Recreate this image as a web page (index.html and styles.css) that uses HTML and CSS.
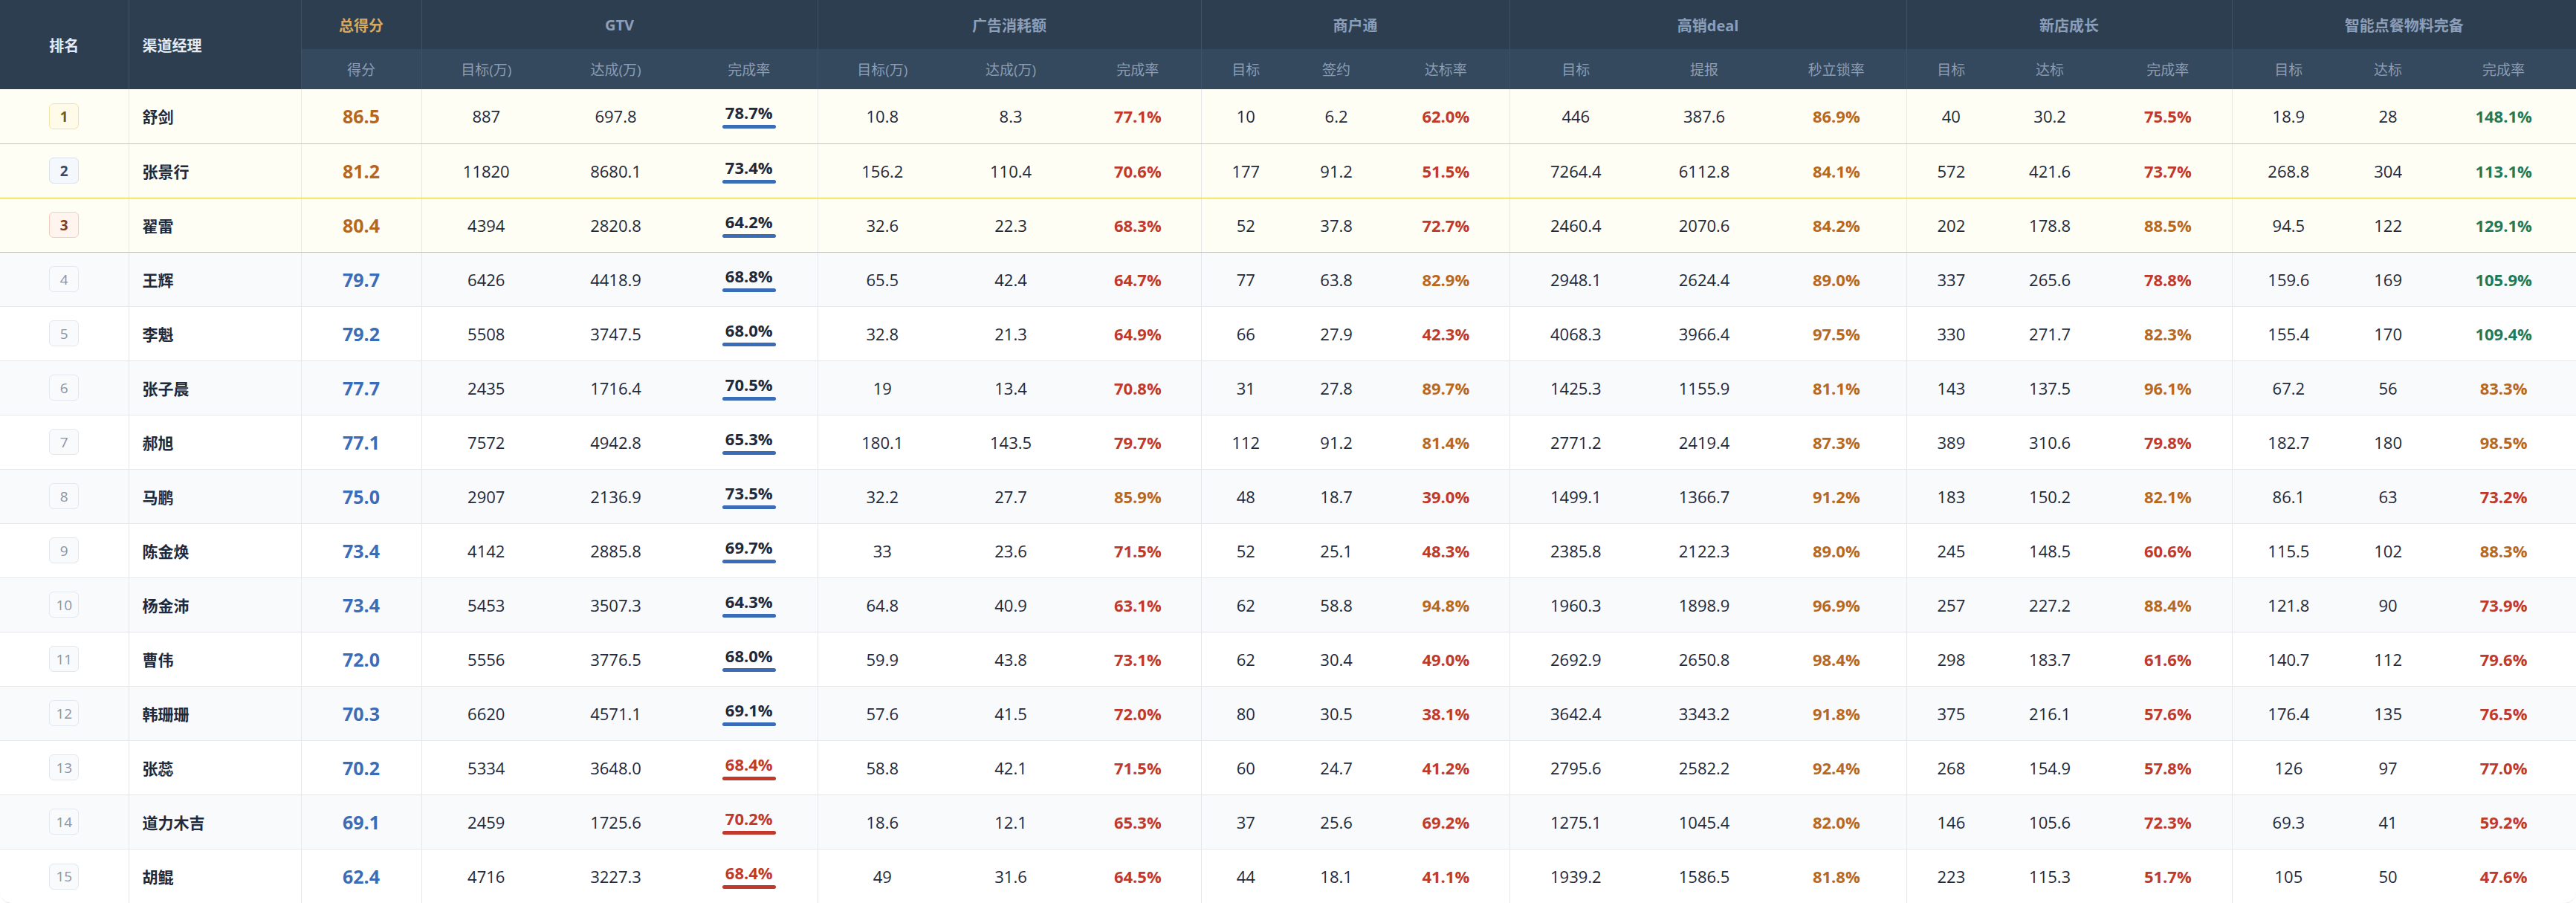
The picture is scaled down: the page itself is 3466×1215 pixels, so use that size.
FILE: index.html
```html
<!DOCTYPE html>
<html lang="zh-CN">
<head>
<meta charset="utf-8">
<title>渠道经理排名</title>
<link rel="stylesheet" href="styles.css">
</head>
<body>
<div class="board">
<table class="rank-table">
<colgroup>
<col style="width:173px"><col style="width:232px"><col style="width:162px">
<col style="width:174px"><col style="width:175px"><col style="width:184px">
<col style="width:174px"><col style="width:172px"><col style="width:170px">
<col style="width:120px"><col style="width:124px"><col style="width:171px">
<col style="width:178px"><col style="width:168px"><col style="width:188px">
<col style="width:120px"><col style="width:146px"><col style="width:172px">
<col style="width:152px"><col style="width:116px"><col style="width:195px">
</colgroup>
<thead>
<tr class="h1">
<th rowspan="2" class="th-main">排名</th>
<th rowspan="2" class="th-main th-name gs">渠道经理</th>
<th class="th-group th-total gs">总得分</th>
<th colspan="3" class="th-group gs">GTV</th>
<th colspan="3" class="th-group gs">广告消耗额</th>
<th colspan="3" class="th-group gs">商户通</th>
<th colspan="3" class="th-group gs">高销deal</th>
<th colspan="3" class="th-group gs">新店成长</th>
<th colspan="3" class="th-group gs">智能点餐物料完备</th>
</tr>
<tr class="h2">
<th class="gs">得分</th>
<th class="gs">目标(万)</th><th>达成(万)</th><th>完成率</th>
<th class="gs">目标(万)</th><th>达成(万)</th><th>完成率</th>
<th class="gs">目标</th><th>签约</th><th>达标率</th>
<th class="gs">目标</th><th>提报</th><th>秒立锁率</th>
<th class="gs">目标</th><th>达标</th><th>完成率</th>
<th class="gs">目标</th><th>达标</th><th>完成率</th>
</tr>
</thead>
<tbody>
<tr class="top">
<td><span class="badge b1">1</span></td><td class="name gs">舒剑</td><td class="score gold gs">86.5</td>
<td class="gs">887</td><td>697.8</td><td><span class="rate">78.7%</span></td>
<td class="gs">10.8</td><td>8.3</td><td class="pct red">77.1%</td>
<td class="gs">10</td><td>6.2</td><td class="pct red">62.0%</td>
<td class="gs">446</td><td>387.6</td><td class="pct org">86.9%</td>
<td class="gs">40</td><td>30.2</td><td class="pct red">75.5%</td>
<td class="gs">18.9</td><td>28</td><td class="pct grn">148.1%</td>
</tr>
<tr class="top">
<td><span class="badge b2">2</span></td><td class="name gs">张景行</td><td class="score gold gs">81.2</td>
<td class="gs">11820</td><td>8680.1</td><td><span class="rate">73.4%</span></td>
<td class="gs">156.2</td><td>110.4</td><td class="pct red">70.6%</td>
<td class="gs">177</td><td>91.2</td><td class="pct red">51.5%</td>
<td class="gs">7264.4</td><td>6112.8</td><td class="pct org">84.1%</td>
<td class="gs">572</td><td>421.6</td><td class="pct red">73.7%</td>
<td class="gs">268.8</td><td>304</td><td class="pct grn">113.1%</td>
</tr>
<tr class="top">
<td><span class="badge b3">3</span></td><td class="name gs">翟雷</td><td class="score gold gs">80.4</td>
<td class="gs">4394</td><td>2820.8</td><td><span class="rate">64.2%</span></td>
<td class="gs">32.6</td><td>22.3</td><td class="pct red">68.3%</td>
<td class="gs">52</td><td>37.8</td><td class="pct red">72.7%</td>
<td class="gs">2460.4</td><td>2070.6</td><td class="pct org">84.2%</td>
<td class="gs">202</td><td>178.8</td><td class="pct org">88.5%</td>
<td class="gs">94.5</td><td>122</td><td class="pct grn">129.1%</td>
</tr>
<tr class="alt">
<td><span class="badge">4</span></td><td class="name gs">王辉</td><td class="score blue gs">79.7</td>
<td class="gs">6426</td><td>4418.9</td><td><span class="rate">68.8%</span></td>
<td class="gs">65.5</td><td>42.4</td><td class="pct red">64.7%</td>
<td class="gs">77</td><td>63.8</td><td class="pct org">82.9%</td>
<td class="gs">2948.1</td><td>2624.4</td><td class="pct org">89.0%</td>
<td class="gs">337</td><td>265.6</td><td class="pct red">78.8%</td>
<td class="gs">159.6</td><td>169</td><td class="pct grn">105.9%</td>
</tr>
<tr>
<td><span class="badge">5</span></td><td class="name gs">李魁</td><td class="score blue gs">79.2</td>
<td class="gs">5508</td><td>3747.5</td><td><span class="rate">68.0%</span></td>
<td class="gs">32.8</td><td>21.3</td><td class="pct red">64.9%</td>
<td class="gs">66</td><td>27.9</td><td class="pct red">42.3%</td>
<td class="gs">4068.3</td><td>3966.4</td><td class="pct org">97.5%</td>
<td class="gs">330</td><td>271.7</td><td class="pct org">82.3%</td>
<td class="gs">155.4</td><td>170</td><td class="pct grn">109.4%</td>
</tr>
<tr class="alt">
<td><span class="badge">6</span></td><td class="name gs">张子晨</td><td class="score blue gs">77.7</td>
<td class="gs">2435</td><td>1716.4</td><td><span class="rate">70.5%</span></td>
<td class="gs">19</td><td>13.4</td><td class="pct red">70.8%</td>
<td class="gs">31</td><td>27.8</td><td class="pct org">89.7%</td>
<td class="gs">1425.3</td><td>1155.9</td><td class="pct org">81.1%</td>
<td class="gs">143</td><td>137.5</td><td class="pct org">96.1%</td>
<td class="gs">67.2</td><td>56</td><td class="pct org">83.3%</td>
</tr>
<tr>
<td><span class="badge">7</span></td><td class="name gs">郝旭</td><td class="score blue gs">77.1</td>
<td class="gs">7572</td><td>4942.8</td><td><span class="rate">65.3%</span></td>
<td class="gs">180.1</td><td>143.5</td><td class="pct red">79.7%</td>
<td class="gs">112</td><td>91.2</td><td class="pct org">81.4%</td>
<td class="gs">2771.2</td><td>2419.4</td><td class="pct org">87.3%</td>
<td class="gs">389</td><td>310.6</td><td class="pct red">79.8%</td>
<td class="gs">182.7</td><td>180</td><td class="pct org">98.5%</td>
</tr>
<tr class="alt">
<td><span class="badge">8</span></td><td class="name gs">马鹏</td><td class="score blue gs">75.0</td>
<td class="gs">2907</td><td>2136.9</td><td><span class="rate">73.5%</span></td>
<td class="gs">32.2</td><td>27.7</td><td class="pct org">85.9%</td>
<td class="gs">48</td><td>18.7</td><td class="pct red">39.0%</td>
<td class="gs">1499.1</td><td>1366.7</td><td class="pct org">91.2%</td>
<td class="gs">183</td><td>150.2</td><td class="pct org">82.1%</td>
<td class="gs">86.1</td><td>63</td><td class="pct red">73.2%</td>
</tr>
<tr>
<td><span class="badge">9</span></td><td class="name gs">陈金焕</td><td class="score blue gs">73.4</td>
<td class="gs">4142</td><td>2885.8</td><td><span class="rate">69.7%</span></td>
<td class="gs">33</td><td>23.6</td><td class="pct red">71.5%</td>
<td class="gs">52</td><td>25.1</td><td class="pct red">48.3%</td>
<td class="gs">2385.8</td><td>2122.3</td><td class="pct org">89.0%</td>
<td class="gs">245</td><td>148.5</td><td class="pct red">60.6%</td>
<td class="gs">115.5</td><td>102</td><td class="pct org">88.3%</td>
</tr>
<tr class="alt">
<td><span class="badge">10</span></td><td class="name gs">杨金沛</td><td class="score blue gs">73.4</td>
<td class="gs">5453</td><td>3507.3</td><td><span class="rate">64.3%</span></td>
<td class="gs">64.8</td><td>40.9</td><td class="pct red">63.1%</td>
<td class="gs">62</td><td>58.8</td><td class="pct org">94.8%</td>
<td class="gs">1960.3</td><td>1898.9</td><td class="pct org">96.9%</td>
<td class="gs">257</td><td>227.2</td><td class="pct org">88.4%</td>
<td class="gs">121.8</td><td>90</td><td class="pct red">73.9%</td>
</tr>
<tr>
<td><span class="badge">11</span></td><td class="name gs">曹伟</td><td class="score blue gs">72.0</td>
<td class="gs">5556</td><td>3776.5</td><td><span class="rate">68.0%</span></td>
<td class="gs">59.9</td><td>43.8</td><td class="pct red">73.1%</td>
<td class="gs">62</td><td>30.4</td><td class="pct red">49.0%</td>
<td class="gs">2692.9</td><td>2650.8</td><td class="pct org">98.4%</td>
<td class="gs">298</td><td>183.7</td><td class="pct red">61.6%</td>
<td class="gs">140.7</td><td>112</td><td class="pct red">79.6%</td>
</tr>
<tr class="alt">
<td><span class="badge">12</span></td><td class="name gs">韩珊珊</td><td class="score blue gs">70.3</td>
<td class="gs">6620</td><td>4571.1</td><td><span class="rate">69.1%</span></td>
<td class="gs">57.6</td><td>41.5</td><td class="pct red">72.0%</td>
<td class="gs">80</td><td>30.5</td><td class="pct red">38.1%</td>
<td class="gs">3642.4</td><td>3343.2</td><td class="pct org">91.8%</td>
<td class="gs">375</td><td>216.1</td><td class="pct red">57.6%</td>
<td class="gs">176.4</td><td>135</td><td class="pct red">76.5%</td>
</tr>
<tr>
<td><span class="badge">13</span></td><td class="name gs">张蕊</td><td class="score blue gs">70.2</td>
<td class="gs">5334</td><td>3648.0</td><td><span class="rate low">68.4%</span></td>
<td class="gs">58.8</td><td>42.1</td><td class="pct red">71.5%</td>
<td class="gs">60</td><td>24.7</td><td class="pct red">41.2%</td>
<td class="gs">2795.6</td><td>2582.2</td><td class="pct org">92.4%</td>
<td class="gs">268</td><td>154.9</td><td class="pct red">57.8%</td>
<td class="gs">126</td><td>97</td><td class="pct red">77.0%</td>
</tr>
<tr class="alt">
<td><span class="badge">14</span></td><td class="name gs">道力木吉</td><td class="score blue gs">69.1</td>
<td class="gs">2459</td><td>1725.6</td><td><span class="rate low">70.2%</span></td>
<td class="gs">18.6</td><td>12.1</td><td class="pct red">65.3%</td>
<td class="gs">37</td><td>25.6</td><td class="pct red">69.2%</td>
<td class="gs">1275.1</td><td>1045.4</td><td class="pct org">82.0%</td>
<td class="gs">146</td><td>105.6</td><td class="pct red">72.3%</td>
<td class="gs">69.3</td><td>41</td><td class="pct red">59.2%</td>
</tr>
<tr>
<td><span class="badge">15</span></td><td class="name gs">胡鲲</td><td class="score blue gs">62.4</td>
<td class="gs">4716</td><td>3227.3</td><td><span class="rate low">68.4%</span></td>
<td class="gs">49</td><td>31.6</td><td class="pct red">64.5%</td>
<td class="gs">44</td><td>18.1</td><td class="pct red">41.1%</td>
<td class="gs">1939.2</td><td>1586.5</td><td class="pct org">81.8%</td>
<td class="gs">223</td><td>115.3</td><td class="pct red">51.7%</td>
<td class="gs">105</td><td>50</td><td class="pct red">47.6%</td>
</tr>
</tbody>
</table>
</div>
</body>
</html>
```

FILE: styles.css
```css
* { box-sizing: border-box; }

html, body {
  margin: 0;
  padding: 0;
  background: #ffffff;
}

body {
  font-family: "Open Sans", "Noto Sans CJK SC", sans-serif;
  color: #1e293b;
}

.board {
  width: 3466px;
  overflow: hidden;
  border-radius: 0 0 16px 16px;
  border-bottom: 1px solid #e2e8f0;
  background: #ffffff;
}

.rank-table {
  width: 3466px;
  table-layout: fixed;
  border-collapse: collapse;
  border-spacing: 0;
}

/* ---------- header ---------- */
.rank-table th {
  padding: 0;
  text-align: center;
  white-space: nowrap;
}

.h1 th {
  height: 66px;
  background: #2d3e50;
  font-size: 20px;
  font-weight: 700;
  color: #8b9fba;
}

.h2 th {
  height: 54px;
  background: #34495e;
  font-size: 19px;
  font-weight: 400;
  color: #8c9db4;
}

.rank-table thead th.gs {
  border-left: 1px solid #3e5166;
}

.h1 th.th-main {
  background: #2d3e50;
  color: #e3eaf3;
  font-size: 20px;
  font-weight: 700;
}

.h1 th.th-name {
  text-align: left;
  padding-left: 18px;
}

.h1 th.th-total {
  color: #d7a95e;
}

/* ---------- body ---------- */
.rank-table tbody tr {
  height: 73px;
}

.rank-table td {
  padding: 0;
  text-align: center;
  font-size: 22px;
  color: #1e293b;
  border-bottom: 1px solid #e5e7eb;
  white-space: nowrap;
}

.rank-table tbody td.gs {
  border-left: 1px solid #e5e7eb;
}

.rank-table tbody tr.top td {
  background: #fffef5;
  border-bottom: 1px solid #e6cb47;
}

.rank-table tbody tr.alt td {
  background: #f8fafc;
}

.rank-table tbody tr:last-child td {
  border-bottom: none;
}

.name {
  text-align: left !important;
  padding-left: 18px !important;
  font-size: 21px !important;
  font-weight: 700;
  color: #1e293b;
}

.score {
  font-size: 25px !important;
  font-weight: 700;
}

.gold { color: #b6661f !important; }
.blue { color: #3b6cb8 !important; }

.pct {
  font-weight: 700;
}

.red { color: #c0392b !important; }
.org { color: #b8681e !important; }
.grn { color: #1f7a56 !important; }

/* rank badges */
.badge {
  display: inline-flex;
  align-items: center;
  justify-content: center;
  width: 40px;
  height: 35px;
  border-radius: 6px;
  border: 1px solid #e2e8f0;
  background: #f8fafc;
  color: #8a94a6;
  font-size: 19px;
  font-weight: 400;
  vertical-align: middle;
}

.badge.b1 {
  background: #fffbe8;
  border-color: #f3e2a6;
  color: #7a5b08;
  font-weight: 700;
}

.badge.b2 {
  background: #f4f7fb;
  border-color: #d9e1ec;
  color: #3a4a60;
  font-weight: 700;
}

.badge.b3 {
  background: #fff4ee;
  border-color: #f4ceb8;
  color: #8a3a12;
  font-weight: 700;
}

/* GTV rate with underline bar */
.rate {
  position: relative;
  display: inline-block;
  padding: 0 4px 10px;
  line-height: 26px;
  font-weight: 700;
  color: #1e293b;
  vertical-align: middle;
}

.rate::after {
  content: "";
  position: absolute;
  left: 0;
  right: 0;
  bottom: 1px;
  height: 5px;
  border-radius: 3px;
  background: #3b6cb8;
}

.rate.low {
  color: #c0392b;
}

.rate.low::after {
  background: #c0392b;
}
```
